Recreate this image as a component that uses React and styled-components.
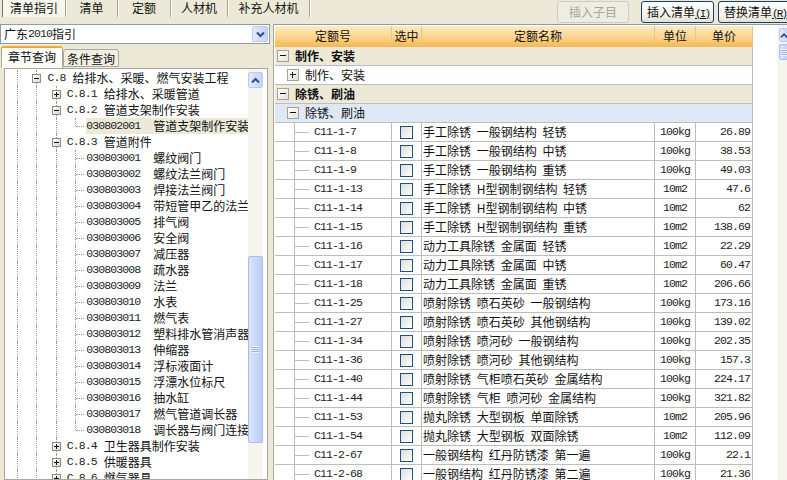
import React from 'react';
import styled, { createGlobalStyle } from 'styled-components';

const face = '#ECE9D8'; // XP dialog colour
const gridLine = '#BDBDBD';
const monoFont = '"Liberation Mono", monospace';
const cjkFont = '"Noto Sans CJK SC", "Liberation Sans", sans-serif';

const GlobalStyle = createGlobalStyle`
  html, body { margin: 0; padding: 0; background: ${face}; }
  body { font: 12px/16px ${cjkFont}; color: #111; }
`;

const Page = styled.div`
  width: 787px;
  height: 480px;
  overflow: hidden;
  background: ${face};
  display: flex;
  flex-direction: column;
`;

const TopBar = styled.div`
  height: 24px;
  flex: none;
  display: flex;
  justify-content: space-between;
`;

const TopTabs = styled.div`
  display: flex;
  height: 17px;
  padding-left: 2px;
`;

const TopTab = styled.div`
  width: ${p => p.$w}px;
  box-sizing: border-box;
  text-align: center;
  line-height: 15px;
  border-right: 1px solid #A9A693;
  box-shadow: 1px 0 0 #fff;
  background: ${p => (p.$active ? '#F6F5EE' : 'transparent')};
  border-left: ${p => (p.$active ? '1px solid #77756A' : 'none')};
`;

const ButtonRow = styled.div`
  display: flex;
  padding-top: 1px;
  margin-right: -4px;
`;

const Button = styled.div`
  width: ${p => (p.$disabled ? 72 : 73)}px;
  height: 22px;
  box-sizing: border-box;
  margin-left: ${p => p.$gap || 0}px;
  border: 1px solid ${p => (p.$disabled ? '#CFCCBC' : '#1C3F5E')};
  border-radius: 3px;
  background: ${p => (p.$disabled ? '#EFEDE3' : 'linear-gradient(#FFFFFF, #F2F1EA 70%, #E3E1D5)')};
  color: ${p => (p.$disabled ? '#A8A595' : '#111')};
  line-height: 20px;
  padding-left: ${p => (p.$disabled ? 11 : 5)}px;
  white-space: nowrap;
`;

const Hotkey = styled.span`
  font-family: ${monoFont};
  font-size: 11px;
  letter-spacing: -1.8px;
  text-decoration: underline;
`;

const Body = styled.div`
  flex: 1;
  display: flex;
  min-height: 0;
`;

const LeftPanel = styled.div`
  width: 273px;
  flex: none;
  display: flex;
  flex-direction: column;
`;

const Combo = styled.div`
  width: 270px;
  height: 20px;
  box-sizing: border-box;
  border: 1px solid #8E9BA8;
  background: #fff;
  display: flex;
  align-items: center;
  justify-content: space-between;
  padding: 0 1px 0 3px;
`;

const ComboText = styled.span`
  display: flex;
  align-items: center;
`;

const ScrollButton = styled.div`
  width: ${p => p.$w}px;
  height: ${p => p.$h}px;
  flex: none;
  box-sizing: border-box;
  border: 1px solid #B9CBEF;
  border-radius: 2px;
  background: linear-gradient(90deg, #E3EBFC, #C5D4F6);
  display: flex;
  align-items: center;
  justify-content: center;
`;

const SideTabs = styled.div`
  display: flex;
  align-items: flex-end;
  height: 23px;
  flex: none;
  padding: 1px 0 0 1px;
  box-sizing: border-box;
`;

const SideTab = styled.div`
  box-sizing: border-box;
  width: ${p => (p.$active ? 62 : 56)}px;
  height: ${p => (p.$active ? 22 : 18)}px;
  text-align: center;
  line-height: 17px;
  background: ${p => (p.$active ? '#FBFBF8' : '#F1EFE4')};
  border: 1px solid #ACA899;
  border-bottom: ${p => (p.$active ? 'none' : '1px solid #ACA899')};
  border-top: ${p => (p.$active ? '2px solid #EFA92F' : '1px solid #ACA899')};
  border-radius: 3px 3px 0 0;
  margin-bottom: ${p => (p.$active ? -1 : 0)}px;
`;

const TreeBox = styled.div`
  flex: 1;
  min-height: 0;
  margin: 1px 5px 0 4px;
  border: 1px solid #ACA899;
  background: #fff;
  display: flex;
  overflow: hidden;
`;

const Tree = styled.div`
  width: 243px;
  flex: none;
  padding-top: 1px;
`;

const TreeRow = styled.div`
  display: flex;
  height: 16px;
  align-items: stretch;
  white-space: nowrap;
  overflow: hidden;
`;

// one column of indent, with the dotted guide running through it
const Indent = styled.div`
  position: relative;
  width: ${p => (p.$first ? 13 : 19.4)}px;
  flex: none;
  &::before {
    content: '';
    position: absolute;
    right: 0;
    top: 0;
    bottom: ${p => (p.$end ? '8px' : 0)};
    border-right: 1px dotted #9A9A9A;
  }
`;

const Stub = styled.div`
  position: relative;
  width: 10px;
  flex: none;
  &::before {
    content: '';
    position: absolute;
    left: 0;
    width: 8px;
    top: 8px;
    border-top: 1px dotted #9A9A9A;
  }
`;

const ExpanderSlot = styled.div`
  width: 15px;
  flex: none;
  margin-left: -5px;
  display: flex;
  align-items: center;
  position: relative;
`;

const TreeExpander = styled.div`
  width: 9px;
  height: 9px;
  box-sizing: border-box;
  border: 1px solid #8C8C84;
  background: linear-gradient(135deg, #fff, #DAD6C6);
  position: relative;
  &::before {
    content: '';
    position: absolute;
    left: 1px;
    right: 1px;
    top: 3px;
    height: 1px;
    background: #111;
  }
  ${p => p.$plus && `
    &::after {
      content: '';
      position: absolute;
      top: 1px;
      bottom: 1px;
      left: 3px;
      width: 1px;
      background: #111;
    }
  `}
`;

const TreeLabel = styled.div`
  display: flex;
  align-items: center;
  flex: 1;
  min-width: 0;
  background: ${p => (p.$selected ? face : 'transparent')};
`;

const BranchName = styled.span`
  margin-left: 7px;
`;

const Latin = styled.span`
  font-family: ${monoFont};
  font-size: 11.5px;
  letter-spacing: -0.9px;
  color: #222;
  display: inline-block;
  width: ${p => (p.$w ? `${p.$w}px` : 'auto')};
  flex: none;
`;

const TreeScroll = styled.div`
  width: 15px;
  flex: none;
  background: #F5F4EE;
  padding-top: 3px;
  display: flex;
  flex-direction: column;
`;

const TrackGap = styled.div`
  height: 168px;
  flex: none;
`;

const Thumb = styled.div`
  width: ${p => p.$w}px;
  height: ${p => p.$h}px;
  flex: none;
  box-sizing: border-box;
  border: 1px solid #A9BCEA;
  border-radius: 2px;
  background: linear-gradient(90deg, #D9E3FB, #BDCEF5);
  display: flex;
  align-items: center;
  justify-content: center;
`;

const Grip = styled.div`
  width: 7px;
  height: 7px;
  background: repeating-linear-gradient(#EEF3FF 0 1px, #9DB1E3 1px 2px);
`;

const RightPanel = styled.div`
  flex: 1;
  display: flex;
  min-width: 0;
`;

const Grid = styled.div`
  width: 504px;
  flex: none;
  box-sizing: border-box;
  border-top: 1px solid #8E9BA8;
  border-left: 1px solid #ACA899;
  padding: 1px 0 0 1px;
  background: #fff;
  overflow: hidden;
`;

const Row = styled.div`
  display: grid;
  grid-template-columns: 117px 30px 233px 41px 57px;
  width: 478px;
  height: ${p => (p.$head ? 21 : 19)}px;
  box-sizing: border-box;
  background: ${p => p.$bg || '#fff'};
`;

const HeadCell = styled.div`
  text-align: center;
  line-height: 19px;
  background: linear-gradient(#FCEBC4, #FBD48C 55%, #F5B651);
  border-right: 1px solid #E5C68D;
`;

const Span = styled.div`
  grid-column: 1 / -1;
  display: flex;
  align-items: center;
  border-bottom: 1px solid ${gridLine};
  border-right: 1px solid ${gridLine};
  padding-left: ${p => p.$pad}px;
  font-weight: ${p => (p.$bold ? 700 : 400)};
`;

const GridExpander = styled.div`
  width: 12px;
  height: 12px;
  flex: none;
  box-sizing: border-box;
  border: 1px solid #A5A294;
  background: linear-gradient(135deg, #fff, #E6E3D4);
  margin-right: 6px;
  position: relative;
  &::before {
    content: '';
    position: absolute;
    left: 2px;
    right: 2px;
    top: 4px;
    height: 1px;
    background: #111;
  }
  ${p => p.$plus && `
    &::after {
      content: '';
      position: absolute;
      top: 2px;
      bottom: 2px;
      left: 4px;
      width: 1px;
      background: #111;
    }
  `}
`;

const Cell = styled.div`
  display: flex;
  align-items: center;
  justify-content: ${p => p.$align || 'flex-start'};
  padding: ${p => p.$pad || '0'};
  border-bottom: 1px solid ${gridLine};
  border-right: 1px solid ${gridLine};
  white-space: nowrap;
  overflow: hidden;
  word-spacing: 3px;
  min-width: 0;
`;

const CodeCell = styled(Cell)`
  position: relative;
  padding-left: 39px;
  &::before {
    content: '';
    position: absolute;
    left: 19px;
    top: 0;
    bottom: -1px;
    border-left: 1px solid #BDBDBD;
  }
  &::after {
    content: '';
    position: absolute;
    left: 19px;
    width: 15px;
    top: 9px;
    border-top: 1px solid #BDBDBD;
  }
`;

const Check = styled.div`
  width: 13px;
  height: 13px;
  box-sizing: border-box;
  border: 1px solid #1C5180;
  background: linear-gradient(135deg, #DCDCD7, #FFFFFF);
`;

const RightStrip = styled.div`
  flex: 1;
  background: #F5F4EE;
  border-top: 1px solid #8E9BA8;
  padding: 3px 0 0 2px;
  display: flex;
  flex-direction: column;
  gap: 2px;
  align-items: flex-start;
`;

const Chevron = ({ down }) => (
  <svg width="9" height="7" viewBox="0 0 9 7">
    <path d={down ? 'M1 1.5 L4.5 5 L8 1.5' : 'M1 5.5 L4.5 2 L8 5.5'} fill="none" stroke="#2F4D8E" strokeWidth="2" />
  </svg>
);

const leaves = [
  ['030803001', '螺纹阀门'], ['030803002', '螺纹法兰阀门'], ['030803003', '焊接法兰阀门'],
  ['030803004', '带短管甲乙的法兰'], ['030803005', '排气阀'], ['030803006', '安全阀'],
  ['030803007', '减压器'], ['030803008', '疏水器'], ['030803009', '法兰'],
  ['030803010', '水表'], ['030803011', '燃气表'], ['030803012', '塑料排水管消声器'],
  ['030803013', '伸缩器'], ['030803014', '浮标液面计'], ['030803015', '浮漂水位标尺'],
  ['030803016', '抽水缸'], ['030803017', '燃气管道调长器'], ['030803018', '调长器与阀门连接'],
];

const rows = [
  ['C11-1-7', '手工除锈 一般钢结构 轻锈', '100kg', '26.89'],
  ['C11-1-8', '手工除锈 一般钢结构 中锈', '100kg', '38.53'],
  ['C11-1-9', '手工除锈 一般钢结构 重锈', '100kg', '49.03'],
  ['C11-1-13', '手工除锈 H型钢制钢结构 轻锈', '10m2', '47.6'],
  ['C11-1-14', '手工除锈 H型钢制钢结构 中锈', '10m2', '62'],
  ['C11-1-15', '手工除锈 H型钢制钢结构 重锈', '10m2', '138.69'],
  ['C11-1-16', '动力工具除锈 金属面 轻锈', '10m2', '22.29'],
  ['C11-1-17', '动力工具除锈 金属面 中锈', '10m2', '60.47'],
  ['C11-1-18', '动力工具除锈 金属面 重锈', '10m2', '206.66'],
  ['C11-1-25', '喷射除锈 喷石英砂 一般钢结构', '100kg', '173.16'],
  ['C11-1-27', '喷射除锈 喷石英砂 其他钢结构', '100kg', '139.02'],
  ['C11-1-34', '喷射除锈 喷河砂 一般钢结构', '100kg', '202.35'],
  ['C11-1-36', '喷射除锈 喷河砂 其他钢结构', '100kg', '157.3'],
  ['C11-1-40', '喷射除锈 气柜喷石英砂 金属结构', '100kg', '224.17'],
  ['C11-1-44', '喷射除锈 气柜 喷河砂 金属结构', '100kg', '321.82'],
  ['C11-1-53', '抛丸除锈 大型钢板 单面除锈', '10m2', '205.96'],
  ['C11-1-54', '抛丸除锈 大型钢板 双面除锈', '10m2', '112.09'],
  ['C11-2-67', '一般钢结构 红丹防锈漆 第一遍', '100kg', '22.1'],
  ['C11-2-68', '一般钢结构 红丹防锈漆 第二遍', '100kg', '21.36'],
];

// depth = how many guide columns follow the first one
function Guides({ depth }) {
  return (
    <>
      <Indent $first />
      {Array.from({ length: depth }, (_, i) => <Indent key={i} />)}
    </>
  );
}

function Branch({ depth, plus, num, name }) {
  return (
    <TreeRow>
      <Guides depth={depth} />
      <ExpanderSlot><TreeExpander $plus={plus} /></ExpanderSlot>
      <TreeLabel>
        <Latin>{num}</Latin>
        <BranchName>{name}</BranchName>
      </TreeLabel>
    </TreeRow>
  );
}

function Leaf({ num, name, selected, last }) {
  return (
    <TreeRow>
      <Guides depth={2} />
      <Indent $end={last} />
      <Stub />
      <TreeLabel $selected={selected}>
        <Latin $w={67}>{num}</Latin>
        <span>{name}</span>
      </TreeLabel>
    </TreeRow>
  );
}

export default function App() {
  return (
    <Page>
      <GlobalStyle />
      <TopBar>
        <TopTabs>
          <TopTab $w={64} $active>清单指引</TopTab>
          <TopTab $w={52}>清单</TopTab>
          <TopTab $w={53}>定额</TopTab>
          <TopTab $w={57}>人材机</TopTab>
          <TopTab $w={82}>补充人材机</TopTab>
        </TopTabs>
        <ButtonRow>
          <Button $disabled>插入子目</Button>
          <Button $gap={12}>插入清单<Hotkey>(I)</Hotkey></Button>
          <Button $gap={4}>替换清单<Hotkey>(R)</Hotkey></Button>
        </ButtonRow>
      </TopBar>
      <Body>
        <LeftPanel>
          <Combo>
            <ComboText><span>广东</span><Latin>2010</Latin><span>指引</span></ComboText>
            <ScrollButton $w={16} $h={16}><Chevron down /></ScrollButton>
          </Combo>
          <SideTabs>
            <SideTab $active>章节查询</SideTab>
            <SideTab>条件查询</SideTab>
          </SideTabs>
          <TreeBox>
            <Tree>
              <Branch depth={1} num="C.8" name="给排水、采暖、燃气安装工程" />
              <Branch depth={2} plus num="C.8.1" name="给排水、采暖管道" />
              <Branch depth={2} num="C.8.2" name="管道支架制作安装" />
              <Leaf num="030802001" name="管道支架制作安装" selected last />
              <Branch depth={2} num="C.8.3" name="管道附件" />
              {leaves.map(([num, name], i) => (
                <Leaf key={num} num={num} name={name} last={i === leaves.length - 1} />
              ))}
              <Branch depth={2} plus num="C.8.4" name="卫生器具制作安装" />
              <Branch depth={2} plus num="C.8.5" name="供暖器具" />
              <Branch depth={2} plus num="C.8.6" name="燃气器具" />
            </Tree>
            <TreeScroll>
              <ScrollButton $w={15} $h={16}><Chevron /></ScrollButton>
              <TrackGap />
              <Thumb $w={15} $h={187}><Grip /></Thumb>
            </TreeScroll>
          </TreeBox>
        </LeftPanel>
        <RightPanel>
          <Grid>
            <Row $head>
              <HeadCell>定额号</HeadCell>
              <HeadCell>选中</HeadCell>
              <HeadCell>定额名称</HeadCell>
              <HeadCell>单位</HeadCell>
              <HeadCell>单价</HeadCell>
            </Row>
            <Row $bg={face}><Span $bold $pad={2}><GridExpander />制作、安装</Span></Row>
            <Row><Span $pad={12}><GridExpander $plus />制作、安装</Span></Row>
            <Row $bg={face}><Span $bold $pad={2}><GridExpander />除锈、刷油</Span></Row>
            <Row $bg="#DFE8F5"><Span $pad={12}><GridExpander />除锈、刷油</Span></Row>
            {rows.map(([code, name, unit, price]) => (
              <Row key={code}>
                <CodeCell><Latin>{code}</Latin></CodeCell>
                <Cell $align="center"><Check /></Cell>
                <Cell $pad="0 0 0 1px">{name}</Cell>
                <Cell $align="center"><Latin>{unit}</Latin></Cell>
                <Cell $align="flex-end" $pad="0 2px 0 0"><Latin>{price}</Latin></Cell>
              </Row>
            ))}
          </Grid>
          <RightStrip>
            <ScrollButton $w={10} $h={14}><Chevron /></ScrollButton>
            <Thumb $w={10} $h={16}><Grip /></Thumb>
          </RightStrip>
        </RightPanel>
      </Body>
    </Page>
  );
}
